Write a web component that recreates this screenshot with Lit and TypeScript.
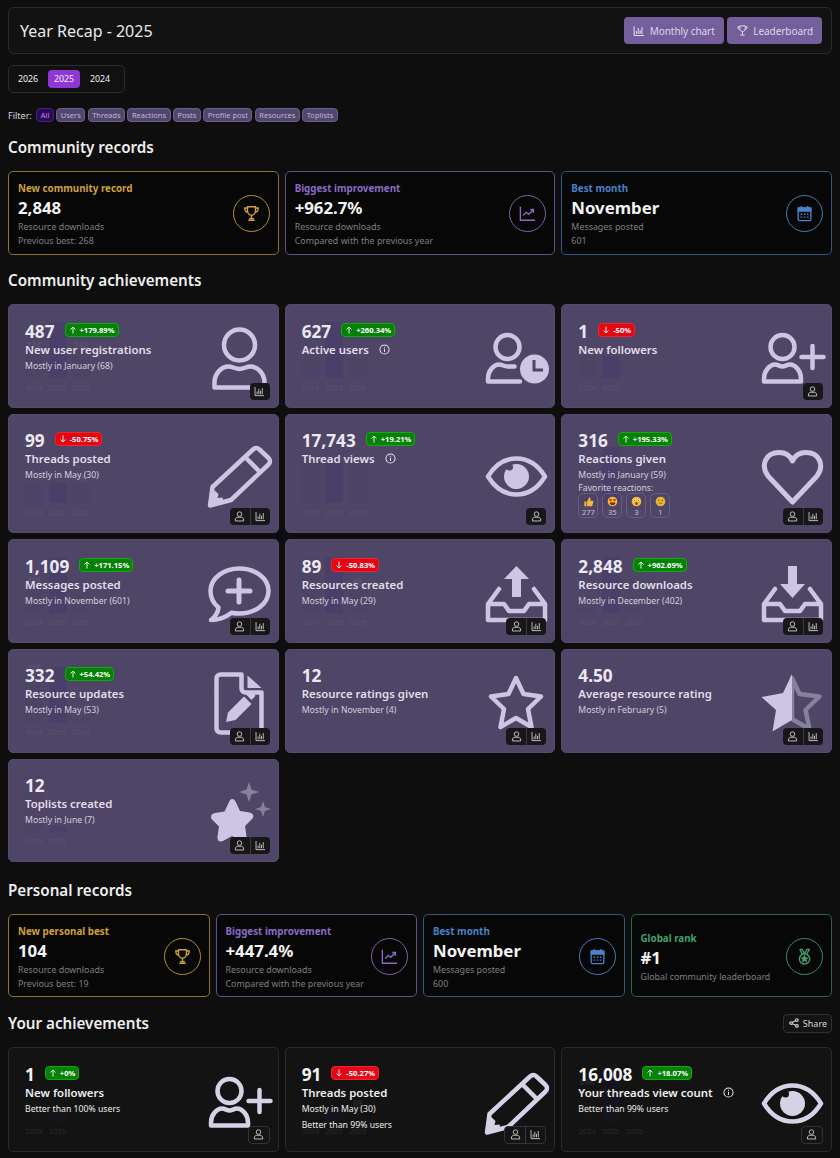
import { LitElement, html, css, svg, nothing } from "lit";
import { customElement } from "lit/decorators.js";

const I: Record<string, any> = {
  user: svg`<circle cx="31.5" cy="18" r="15.5" class="s"/><path class="s" d="M6.5 60.5v-5c0-9 7-16 14-16 4 0 7 2.5 11 2.5s7-2.5 11-2.5c7 0 14 7 14 16v5z"/>`,
  userClock: svg`<circle cx="22.5" cy="20" r="12" class="s"/><path class="s" d="M35 54.500H3v-3c0-8 6-14 11-14 3 0 5.500 2 8.500 2h7"/><circle cx="49.500" cy="42" r="14.500" class="f"/><path class="hand" d="M49 33v10h9"/>`,
  userPlus: svg`<circle cx="21.500" cy="20" r="12" class="s"/><path class="s" d="M3 54.500v-3c0-8 6-14 11-14 3 0 5 2 7.500 2s4.500-2 7.500-2c5 0 11 6 11 14v3z"/><path class="s" d="M51.500 19v22M40.500 30h22"/>`,
  pencil: svg`<path class="s" d="M4.500 43 45 5.500c2-2 4.500-2 6.500 0l9 8.500c2 2 2 4.500 0 6.500L23 56 2 61.500z"/><path class="s" d="M37.500 13.500 51 27"/><path class="f" d="M1 63 4 44l6.500 6-1 4 5-.5 1 4z"/>`,
  eye: svg`<path class="s" d="M3 32.500C10 21 20 14.500 31.500 14.500S53 21 60 32.500C53 44 43 50.500 31.500 50.500S10 44 3 32.500z"/><circle class="f" cx="31.500" cy="32.500" r="12.500"/><circle class="cut" cx="24.500" cy="23" r="3.500"/>`,
  heart: svg`<path class="s t5" d="M31.500 58 7 32C-1 21 5 8.500 18 8.500c7 0 11.500 4 13.500 8.500 2-4.500 6.500-8.500 13.500-8.500 13 0 19 12.500 11 23.500z"/>`,
  chat: svg`<path class="s" d="M31.500 6.500c15.500 0 29 9.500 29 22.500s-13.500 22.500-29 22.500c-3 0-5.500-.3-8-.8C18 55 11 58 3 58c4-3 7-7.500 7.500-12.500C5.500 41.500 2.500 35.500 2.500 29c0-13 13.500-22.500 29-22.500z"/><path class="s t5" d="M31 18v22M20 29h22"/>`,
  inUp: svg`<path class="s" d="M3 58V42L14 27M60 58V42L49 27M3 42h16l5 7h15l5-7h16M3 58h57"/><path class="f" d="M31.500 4 44 17h-8v18h-9V17h-8z"/>`,
  inDown: svg`<path class="s" d="M3 58V42L14 27M60 58V42L49 27M3 42h16l5 7h15l5-7h16M3 58h57"/><path class="f" d="M27 4h9v18h8L31.500 36 19 22h8z"/>`,
  file: svg`<path class="s" d="M12.500 2.500h21v14a4 4 0 0 0 4 4h16v36a4 4 0 0 1-4 4h-37a4 4 0 0 1-4-4v-50a4 4 0 0 1 4-4z"/><path class="f" d="M39.500 3.500l14 12.500h-14z"/><path class="f" d="M18 50l2-9.500 16-16 7.500 7.500-16 16z"/><path class="f" d="M38 22.500l3-3c1-1 2-1 3 0l2.500 2.500c1 1 1 2 0 3l-3 3z"/>`,
  star: svg`<path class="s" d="M31 6l7.500 16 17.500 2.500-13 12.500 3.500 18L31 46l-15.500 9L19 37 6 24.500 23.500 22z"/>`,
  half: svg`<path class="s faint" d="M31 6l7.500 16 20 2.500-14 13.500 4 19L31 47z"/><path class="f" d="M31 2v46L11.500 59.500 15 38 .5 25 22 21z"/>`,
  stars: svg`<path class="f" d="M24 18c2 0 3 1.500 4 3.500l4 8.500 9.500 1.500c4 .7 5 4 2.500 6.500l-7 7 1.500 10c.5 4-2 6-5.500 4.500L24 55l-9 5c-3.500 1.500-6-.5-5.500-4.500l1.500-10-7-7C2 36 3 32.700 7 32l9.500-1.500 4-8.500c1-2 2-4 3.500-4z"/><path class="f faint" d="M41 1l2.500 7.500L51 11l-7.500 2.500L41 21l-2.500-7.500L31 11l7.500-2.500z"/><path class="f faint" d="M55 20l2 6 6 2-6 2-2 6-2-6-6-2 6-2z"/>`,
};

const A = {
  user: html`<svg viewBox="0 0 16 16" class="ai"><circle cx="8" cy="4.500" r="3.300"/><path d="M2 14.500v-1.500c0-2.500 2-4 3.500-4 1 0 1.500.5 2.500.5s1.500-.5 2.500-.5c1.500 0 3.500 1.500 3.500 4v1.500z"/></svg>`,
  chart: html`<svg viewBox="0 0 16 16" class="ai"><path d="M1.500 1.500v12.500h13M4.500 12V8M7 12V4M9.500 12V7M12 12V3"/></svg>`,
};

type Bar = [string, number, string?];
type Card = { v: string; d?: number; ds?: string; t: string; i: string; info?: boolean; sub?: string[]; act: string; bars: Bar[]; rx?: boolean };
const Y3 = (a: number, b: number, c: number, la = "", lb = "", lc = ""): Bar[] => [["2024", a, la], ["2025", b, lb], ["2026", c, lc]];
const community: Card[] = [
  { v: "487", d: 1, ds: "+179.89%", t: "New user registrations", sub: ["Mostly in January (68)"], i: "user", act: "c", bars: Y3(28, 56, 28, "174", "", "182") },
  { v: "627", d: 1, ds: "+260.34%", t: "Active users", info: true, i: "userClock", act: "", bars: Y3(20, 56, 20) },
  { v: "1", d: -1, ds: "-50%", t: "New followers", i: "userPlus", act: "u", bars: [["2024", 22], ["2025", 22]] },
  { v: "99", d: -1, ds: "-50.75%", t: "Threads posted", sub: ["Mostly in May (30)"], i: "pencil", act: "uc", bars: Y3(20, 20, 20, "", "", "75") },
  { v: "17,743", d: 1, ds: "+19.21%", t: "Thread views", info: true, i: "eye", act: "u", bars: Y3(41, 41, 41) },
  { v: "316", d: 1, ds: "+195.33%", t: "Reactions given", sub: ["Mostly in January (59)"], rx: true, i: "heart", act: "uc", bars: Y3(10, 56, 10, "107") },
  { v: "1,109", d: 1, ds: "+171.15%", t: "Messages posted", sub: ["Mostly in November (601)"], i: "chat", act: "uc", bars: Y3(28, 56, 20, "409") },
  { v: "89", d: -1, ds: "-50.83%", t: "Resources created", sub: ["Mostly in May (29)"], i: "inUp", act: "uc", bars: Y3(56, 56, 26, "", "", "68") },
  { v: "2,848", d: 1, ds: "+962.69%", t: "Resource downloads", sub: ["Mostly in December (402)"], i: "inDown", act: "uc", bars: Y3(5, 56, 6, "", "", "3K") },
  { v: "332", d: 1, ds: "+54.42%", t: "Resource updates", sub: ["Mostly in May (53)"], i: "file", act: "uc", bars: Y3(50, 56, 4, "215") },
  { v: "12", t: "Resource ratings given", sub: ["Mostly in November (4)"], i: "star", act: "uc", bars: [] },
  { v: "4.50", t: "Average resource rating", sub: ["Mostly in February (5)"], i: "half", act: "uc", bars: [] },
  { v: "12", t: "Toplists created", sub: ["Mostly in June (7)"], i: "stars", act: "uc", bars: [["2025", 56], ["2026", 6]] },
];
const yours: Card[] = [
  { v: "1", d: 1, ds: "+0%", t: "New followers", sub: ["Better than 100% users"], i: "userPlus", act: "u", bars: [["2024", 14], ["2025", 14]] },
  { v: "91", d: -1, ds: "-50.27%", t: "Threads posted", sub: ["Mostly in May (30)", "Better than 99% users"], i: "pencil", act: "uc", bars: Y3(14, 14, 14, "", "", "69") },
  { v: "16,008", d: 1, ds: "+18.07%", t: "Your threads view count", info: true, sub: ["Better than 99% users"], i: "eye", act: "u", bars: Y3(35, 56, 20, "89K") },
];

const emoji = [
  [svg`<path fill="#f5b83d" d="M2 8h3v7H2zM6 8l3-6c1.500 0 2 1 2 2.500L10.500 7H14c1 0 1.500 1 1 2l-1.500 5c-.3.700-1 1-1.500 1H6z"/>`, "277"],
  [svg`<circle cx="8" cy="8" r="7" fill="#f6b93b"/><path fill="#e0352b" d="M4.500 3.500l1 1.300 1.500-.3.200 1.700L5.500 8 3.200 6.500l.2-1.800zM11.500 3.500l-1 1.300-1.500-.3-.2 1.700L10.500 8l2.300-1.500-.2-1.800z"/><path fill="#6b2d10" d="M4 9.500h8c0 2.500-1.800 4-4 4s-4-1.500-4-4z"/>`, "35"],
  [svg`<circle cx="8" cy="8" r="7" fill="#f6b93b"/><circle cx="5.300" cy="6.300" r="1.600" fill="#fff"/><circle cx="10.700" cy="6.300" r="1.600" fill="#fff"/><circle cx="5.300" cy="6.300" r=".8" fill="#333"/><circle cx="10.700" cy="6.300" r=".8" fill="#333"/><ellipse cx="8" cy="11" rx="1.700" ry="2.100" fill="#7a3a12"/>`, "3"],
  [svg`<circle cx="8" cy="8" r="7" fill="#e6b533"/><circle cx="5.500" cy="6.500" r=".9" fill="#6b4a10"/><circle cx="10.500" cy="6.500" r=".9" fill="#6b4a10"/><path d="M5.500 11c1.500-.8 3.500-.8 5 0" stroke="#6b4a10" stroke-width="1" fill="none"/>`, "1"],
];

const rIcons: Record<string, any> = {
  trophy: svg`<path d="M7 3.500h10v5c0 3-2 5.500-5 5.500s-5-2.500-5-5.500zM7 5H3.500c0 3 1 5 4 5.500M17 5h3.500c0 3-1 5-4 5.500M12 14v4M8 20.500h8M9 18.500h6"/>`,
  line: svg`<path d="M3 3.500V20.500H21.500M6.500 14.500l4-4 3 2.500 5.500-5.500M15.500 7H19.500V11"/>`,
  cal: svg`<rect x="4" y="5" width="16" height="16" rx="2"/><path class="fill" d="M4 5h16v4H4z"/><path d="M8 2.500v4M16 2.500v4"/><path class="grid" d="M7 13h2M11 13h2M15 13h2M7 16.500h2M11 16.500h2M15 16.500h2"/>`,
  medal: svg`<path d="M6 3h3l3 5 3-5h3l-3.500 6.500M6 3l3.500 6.500"/><circle cx="12" cy="15" r="6.500"/><path class="fill" d="M12 11.500l1 2.300 2.500.2-1.900 1.600.6 2.400-2.200-1.300-2.200 1.300.6-2.400L8.500 14l2.500-.2z"/>`,
};

@customElement("app-root")
export class AppRoot extends LitElement {
  static styles = css`
    :host { display: block; height: 1158px; overflow: hidden; background: #0e0e0f; color: #f0f0f0; font-family: "Noto Sans", "Open Sans", sans-serif; font-size: 10px; }
    * { box-sizing: border-box; }
    .page { padding: 7px 8px 0; display: flex; flex-direction: column; }
    .head { height: 47px; display: flex; align-items: center; justify-content: space-between; padding: 0 9px 0 11px; background: #121213; border: 1px solid #2b2b2f; border-radius: 6px; }
    .head h1 { margin: 0; font-size: 16px; font-weight: 400; color: #e8e8e8; padding-top: 1px; }
    .btns { display: flex; gap: 3px; }
    .btn { height: 27px; padding: 0 9px; display: flex; align-items: center; gap: 4.500px; background: #745e9b; border-radius: 4px; color: #dcd6e8; font-size: 10px; letter-spacing: -.05px; }
    .btn svg { width: 12px; height: 12px; fill: none; stroke: #e4dff0; stroke-width: 1.400; }
    .btn svg.big { width: 13px; height: 13px; stroke-width: 1.800; }
    .years { margin-top: 11px; width: 117px; height: 28px; display: flex; align-items: center; gap: 4px; padding: 0 3px; border: 1px solid #2b2b2f; border-radius: 5px; background: #111112; }
    .year { width: 32px; height: 18px; display: flex; align-items: center; justify-content: center; font-size: 8.800px; color: #f2f2f2; border-radius: 4px; }
    .year.on { background: #8f37d4; }
    .filters { margin-top: 15px; height: 14px; display: flex; align-items: center; gap: 2.400px; font-size: 9px; color: #d8d8d8; }
    .filters .lbl { margin-right: 2px; }
    .chip { height: 14px; padding: 0 3.500px; display: flex; align-items: center; border-radius: 4px; background: #51466d; border: 1px solid #6b5f8c; color: #c0b7d6; font-size: 7.500px; }
    .chip.on { background: #2a0b58; border-color: #45207c; color: #c884f2; }
    h2 { margin: 0; font-size: 15.200px; font-weight: 600; color: #eeeeee; line-height: 20px; }
    .h-row { display: flex; justify-content: space-between; align-items: center; }
    .share { height: 19px; padding: 0 4px 0 5px; display: flex; align-items: center; gap: 4px; background: #141415; border: 1px solid #2f2f33; border-radius: 4px; font-size: 9px; color: #d8d8d8; }
    .share svg { width: 10px; height: 10px; fill: none; stroke: #d8d8d8; stroke-width: 1.300; }
    .sec { margin-top: 15px; }
    .sec.p { margin-top: 18px; }
    .sec.y { margin-top: 16px; }
    .recs { margin-top: 14px; display: grid; grid-template-columns: repeat(3, 1fr); gap: 6px; }
    .recs.four { grid-template-columns: repeat(4, 1fr); }
    .rec { height: 84px; padding: 3px 8px 0 9px; display: flex; align-items: center; justify-content: space-between; background: #070708; border: 1px solid; border-radius: 5px; }
    .four .rec { height: 83px; padding-top: 4px; }
    .rec .lb { font-size: 9.800px; font-weight: 700; line-height: 13px; }
    .rec .val { font-size: 16.800px; font-weight: 700; color: #f2f2f2; line-height: 24px; margin-top: 1px; }
    .rec .ln { font-size: 8.900px; color: #7f7f82; line-height: 14px; }
    .rec .ic { flex: none; width: 37px; height: 37px; margin-top: -3px; border-radius: 50%; border: 1px solid; display: flex; align-items: center; justify-content: center; }
    .rec .ic svg { width: 19px; height: 19px; fill: none; stroke: currentColor; stroke-width: 1.700; }
    .rec .ic .fill { fill: currentColor; }
    .gold { border-color: #8c7238; } .gold .lb, .gold .ic { color: #cfa03e; border-color: #b48c38; }
    .purple { border-color: #5f5188; } .purple .lb, .purple .ic { color: #8a6cc4; border-color: #7b62ad; }
    .blue { border-color: #34577f; } .blue .lb, .blue .ic { color: #4a81c9; border-color: #4a7ab4; }
    .green { border-color: #2f6349; } .green .lb, .green .ic { color: #46a06c; border-color: #3f8a60; }
    .grid3 { margin-top: 14px; display: grid; grid-template-columns: repeat(3, 1fr); gap: 6px; }
    .card { --bg: #4f4566; position: relative; min-height: 103.700px; padding: 15px 6.500px 14px 16px; display: flex; justify-content: space-between; align-items: center; border-radius: 5px; background: var(--bg); overflow: hidden; border: 1px solid #554b6c; }
    .card.dark { --bg: #131314; border-color: #2a2a2d; min-height: 104.500px; }
    .txt { position: relative; flex: 1; min-width: 0; align-self: flex-start; }
    .vrow { display: flex; align-items: center; gap: 10px; height: 22px; }
    .v { font-size: 17.200px; font-weight: 700; color: #ebe8f1; }
    .dark .v { color: #f2f2f2; }
    .bd { height: 14px; margin-top: -3px; display: flex; align-items: center; gap: 3px; padding: 0 3px; border-radius: 4px; font-size: 7.600px; font-weight: 700; color: #fff; }
    .bd svg { width: 8px; height: 8px; fill: none; stroke: #fff; stroke-width: .9; }
    .up { background: #058205; border: 1px solid #14a814; }
    .dn { background: #e30613; border: 1px solid #f0242e; }
    .t { font-size: 11.400px; font-weight: 600; color: #e2dfe9; line-height: 15px; margin-top: -.5px; display: flex; align-items: center; gap: 10px; white-space: nowrap; }
    .dark .t { color: #eeeeee; }
    .t svg { width: 11px; height: 11px; fill: none; stroke: #e2dfe9; stroke-width: 1.100; flex: none; }
    .sub { font-size: 8.700px; color: #d4d0dd; line-height: 16px; margin-top: 1px; white-space: nowrap; }
    .sub + .sub { margin-top: 0; }
    .dark .sub { color: #ececec; }
    .fav { font-size: 8.700px; color: #d4d0dd; line-height: 10px; }
    .rx { display: flex; gap: 4px; margin-top: 0; }
    .r { width: 20px; height: 25px; display: flex; flex-direction: column; align-items: center; border: 1px solid #675c82; border-radius: 5px; padding-top: 2px; font-size: 7.500px; color: #c7c1d4; line-height: 10px; }
    .r svg { width: 11px; height: 11px; flex: none; }
    .ico { position: relative; flex: none; width: 63px; height: 64px; margin-top: 5px; overflow: visible; }
    .ico .s { fill: none; stroke: #cdc5e3; stroke-width: 4.500; stroke-linejoin: round; stroke-linecap: round; }
    .ico .t5 { stroke-width: 5; }
    .ico .f { fill: #cdc5e3; }
    .ico .faint { opacity: .45; }
    .ico .cut { fill: var(--bg); }
    .ico .hand { fill: none; stroke: var(--bg); stroke-width: 3; }
    .dark .ico .s { stroke: #d7d1e6; }
    .dark .ico .f { fill: #d7d1e6; }
    .ghost { position: absolute; left: 16px; bottom: 29px; display: flex; gap: 5.500px; align-items: flex-end; }
    .gb { position: relative; width: 18px; display: flex; flex-direction: column; align-items: center; }
    .gb i { display: block; width: 18px; border-radius: 2px 2px 0 0; background: #4d4364; }
    .gb.mid i { background: #4a3f68; }
    .dark .gb i { background: #141415; }
    .dark .gb.mid i { background: #15131b; }
    .gb b { font-size: 8px; font-weight: 700; color: #5b5274; line-height: 10px; }
    .dark .gb b { color: #29292c; }
    .gb span { position: absolute; bottom: -14px; font-size: 7.500px; color: #5b5274; line-height: 10px; }
    .dark .gb span { color: #2a2a2d; }
    .act { position: absolute; right: 8px; bottom: 7px; height: 17px; display: flex; background: #171719; border-radius: 4px; }
    .dark .act { height: 18px; border: 1px solid #333337; background: #141415; }
    .act div { width: 20px; display: flex; align-items: center; justify-content: center; }
    .act div + div { border-left: 1px solid #3a3a3d; }
    .ai { width: 11px; height: 11px; fill: none; stroke: #dcdcdc; stroke-width: 1.200; }
  `;

  private card(c: Card, dark = false) {
    return html`<div class="card ${dark ? "dark" : ""}">
      ${c.bars.length ? html`<div class="ghost">${c.bars.map((b, idx) => html`<div class="gb ${idx === 1 ? "mid" : ""}">${b[2] ? html`<b>${b[2]}</b>` : nothing}<i style="height:${b[1]}px"></i><span>${b[0]}</span></div>`)}</div>` : nothing}
      <div class="txt">
        <div class="vrow"><span class="v">${c.v}</span>
          ${c.ds ? html`<span class="bd ${(c.d ?? 0) > 0 ? "up" : "dn"}"><svg viewBox="0 0 8 8">${(c.d ?? 0) > 0 ? svg`<path d="M4 7.500V1M1.500 3.500 4 1l2.500 2.500"/>` : svg`<path d="M4 .5V7M1.500 4.500 4 7l2.500-2.500"/>`}</svg>${c.ds}</span>` : nothing}
        </div>
        <div class="t">${c.t}${c.info ? html`<svg viewBox="0 0 12 12"><circle cx="6" cy="6" r="5"/><path d="M6 5.200v3.600M6 3v1.100"/></svg>` : nothing}</div>
        ${(c.sub ?? []).map((s) => html`<div class="sub">${s}</div>`)}
        ${c.rx ? html`<div class="fav">Favorite reactions:</div><div class="rx">${emoji.map((e) => html`<div class="r"><svg viewBox="0 0 16 16">${e[0]}</svg>${e[1]}</div>`)}</div>` : nothing}
      </div>
      <svg class="ico" viewBox="0 0 63 64">${I[c.i]}</svg>
      ${c.act ? html`<div class="act">${c.act.includes("u") ? html`<div>${A.user}</div>` : nothing}${c.act.includes("c") ? html`<div>${A.chart}</div>` : nothing}</div>` : nothing}
    </div>`;
  }

  private rec(cls: string, lb: string, val: string, lines: string[], ic: string) {
    return html`<div class="rec ${cls}"><div><div class="lb">${lb}</div><div class="val">${val}</div>${lines.map((l) => html`<div class="ln">${l}</div>`)}</div><div class="ic"><svg viewBox="0 0 24 24">${rIcons[ic]}</svg></div></div>`;
  }

  render() {
    return html`<div class="page">
      <div class="head"><h1>Year Recap - 2025</h1>
        <div class="btns">
          <div class="btn"><svg viewBox="0 0 16 16"><path d="M1.500 1.500v12.500h13M4.500 12V8M7 12V4M9.500 12V7M12 12V3"/></svg>Monthly chart</div>
          <div class="btn"><svg class="big" viewBox="0 0 24 24"><path d="M7 3.500h10v5c0 3-2 5.500-5 5.500s-5-2.500-5-5.500zM7 5H3.500c0 3 1 5 4 5.500M17 5h3.500c0 3-1 5-4 5.500M12 14v6M8 20.500h8"/></svg>Leaderboard</div>
        </div>
      </div>
      <div class="years"><div class="year">2026</div><div class="year on">2025</div><div class="year">2024</div></div>
      <div class="filters"><span class="lbl">Filter:</span>${["All", "Users", "Threads", "Reactions", "Posts", "Profile post", "Resources", "Toplists"].map((f, i) => html`<span class="chip ${i === 0 ? "on" : ""}">${f}</span>`)}</div>
      <h2 class="sec">Community records</h2>
      <div class="recs">
        ${this.rec("gold", "New community record", "2,848", ["Resource downloads", "Previous best: 268"], "trophy")}
        ${this.rec("purple", "Biggest improvement", "+962.7%", ["Resource downloads", "Compared with the previous year"], "line")}
        ${this.rec("blue", "Best month", "November", ["Messages posted", "601"], "cal")}
      </div>
      <h2 class="sec">Community achievements</h2>
      <div class="grid3">${community.map((c) => this.card(c))}</div>
      <h2 class="sec p">Personal records</h2>
      <div class="recs four">
        ${this.rec("gold", "New personal best", "104", ["Resource downloads", "Previous best: 19"], "trophy")}
        ${this.rec("purple", "Biggest improvement", "+447.4%", ["Resource downloads", "Compared with the previous year"], "line")}
        ${this.rec("blue", "Best month", "November", ["Messages posted", "600"], "cal")}
        ${this.rec("green", "Global rank", "#1", ["Global community leaderboard"], "medal")}
      </div>
      <div class="h-row sec y"><h2>Your achievements</h2>
        <div class="share"><svg viewBox="0 0 12 12"><circle cx="9.500" cy="2.500" r="1.600"/><circle cx="2.500" cy="6" r="1.600"/><circle cx="9.500" cy="9.500" r="1.600"/><path d="M4 5.200 8 3.200M4 6.800l4 2"/></svg>Share</div>
      </div>
      <div class="grid3">${yours.map((c) => this.card(c, true))}<div class="card dark"></div><div class="card dark"></div><div class="card dark"></div></div>
    </div>`;
  }
}
